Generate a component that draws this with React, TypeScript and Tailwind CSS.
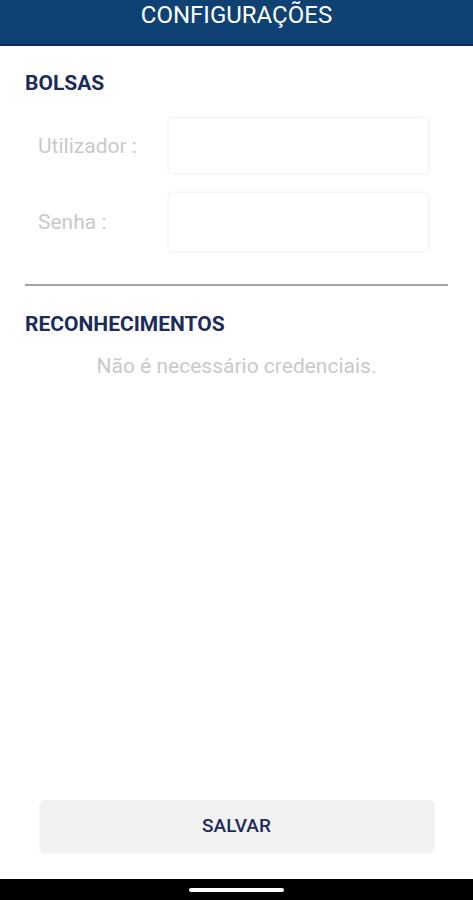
import React from 'react';

const App = () => {
  return (
    <div className="flex h-[900px] w-[473px] flex-col bg-white font-['Roboto',sans-serif]">
      {/* Header */}
      <header className="flex h-[46px] shrink-0 items-start justify-center border-b-2 border-[#0b2a5c] bg-[#0f4172]">
        <h1 className="mt-[1px] text-[24px] leading-[28px] text-white">CONFIGURAÇÕES</h1>
      </header>

      <main className="flex flex-1 flex-col px-[25px]">
        {/* Bolsas */}
        <h2 className="mt-[26px] text-[21px] font-bold leading-[22px] text-[#1b2b5c]">BOLSAS</h2>

        <div className="mt-[24px] flex items-center pl-[13px] pr-[20px]">
          <label className="w-[131px] text-[21px] leading-[24px] text-[#c9c9c9]">Utilizador :</label>
          <div className="h-[55px] flex-1 rounded-[4px] bg-white shadow-[0_0_3px_rgba(0,0,0,0.12)]" />
        </div>

        <div className="mt-[20px] flex items-center pl-[13px] pr-[20px]">
          <label className="w-[131px] text-[21px] leading-[24px] text-[#c9c9c9]">Senha :</label>
          <div className="h-[58px] flex-1 rounded-[4px] bg-white shadow-[0_0_3px_rgba(0,0,0,0.12)]" />
        </div>

        <div className="mt-[33px] h-[2px] bg-[#a3a3ae]" />

        {/* Reconhecimentos */}
        <h2 className="mt-[27px] text-[21px] font-bold leading-[22px] text-[#1b2b5c]">RECONHECIMENTOS</h2>
        <p className="mt-[19px] text-center text-[21px] leading-[24px] text-[#c9c9c9]">Não é necessário credenciais.</p>

        <div className="flex-1" />

        <div className="mb-[27px] flex justify-center">
          <button className="h-[52px] w-[394px] rounded-[5px] bg-[#f2f2f2] text-[19px] font-medium text-[#1b2b5c] shadow-[0_1px_3px_rgba(0,0,0,0.08)]">
            SALVAR
          </button>
        </div>
      </main>

      {/* Navigation bar */}
      <div className="flex h-[21px] shrink-0 items-center justify-center bg-black">
        <div className="h-[4px] w-[95px] rounded-full bg-white" />
      </div>
    </div>
  );
};

export default App;
